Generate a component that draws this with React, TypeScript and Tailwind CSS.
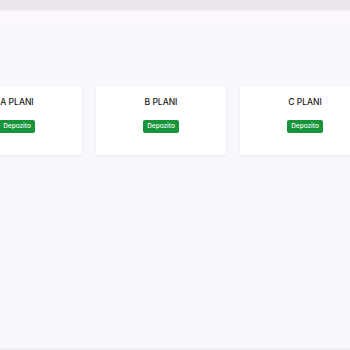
const plans = ["A PLANI", "B PLANI", "C PLANI"];

function PlanCard({ name }: { name: string }) {
  return (
    <div className="flex h-[69px] w-[130px] shrink-0 flex-col items-center rounded-[3px] bg-white pt-[11px] shadow-[0_1px_3px_rgba(30,40,90,0.06)]">
      <h3 className="text-[8.5px] font-medium leading-[11px] text-[#1a1a1a]">{name}</h3>
      <button className="mt-[12px] h-[13px] rounded-[2px] bg-[#15943a] px-[4px] text-[6.5px] font-medium leading-[13px] text-white">
        Depozito
      </button>
    </div>
  );
}

export default function App() {
  return (
    <div className="flex h-[350px] w-[350px] flex-col overflow-hidden bg-[#f7f8fc] font-['Inter',sans-serif]">
      <div className="h-[10px] shrink-0 bg-[#ebe6ed]" />
      <div className="h-[1px] shrink-0 bg-[#f6eff8]" />
      <div className="h-[20px] shrink-0 bg-gradient-to-b from-[#fdf7fe] to-[#f7f8fc]" />
      <div className="mt-[55px] flex gap-[14px] ml-[-48px]">
        {plans.map((p) => (
          <PlanCard key={p} name={p} />
        ))}
      </div>
      <div className="flex-1" />
      <div className="h-[2px] shrink-0 bg-[#eceef3]" />
    </div>
  );
}
